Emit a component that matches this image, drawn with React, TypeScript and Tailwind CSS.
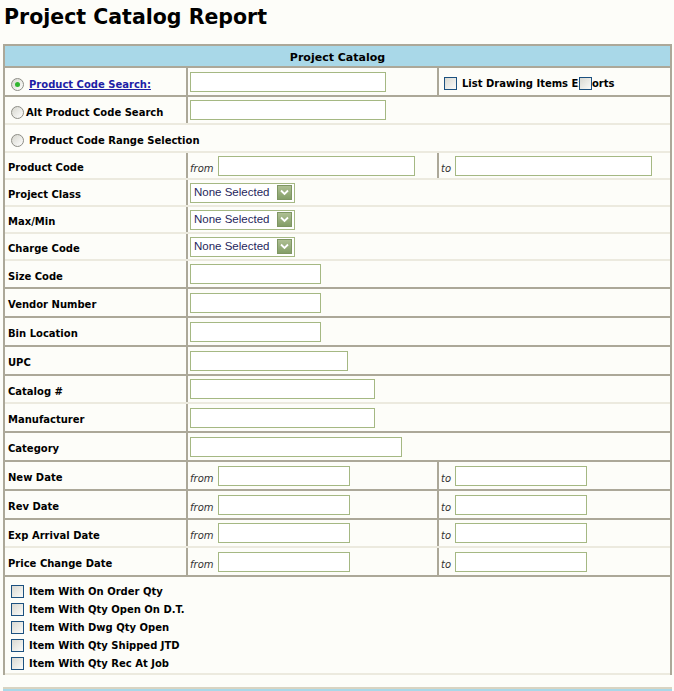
import React from 'react'

const dark = 'border-b-2 border-[#aca899]'
const light = 'border-b-2 border-[#eceadf]'
const divider = 'border-l-2 border-[#aca899]'

function Box({ className = '' }: { className?: string }) {
  return <span className={`inline-block w-[13px] h-[13px] shrink-0 border border-[#1c5180] bg-linear-to-br from-[#d9d9d2] to-[#fbfbf9] ${className}`} />
}

function Radio({ checked = false }: { checked?: boolean }) {
  return (
    <span className="w-[13px] h-[13px] shrink-0 rounded-full border border-[#8d8d86] bg-linear-to-br from-[#d6d6ce] to-white flex items-center justify-center">
      {checked && <span className="w-[5px] h-[5px] rounded-full bg-[#2fb52f]" />}
    </span>
  )
}

function Field({ w }: { w: string }) {
  return <input type="text" className={`h-[20px] ${w} border border-[#a5b883] bg-white outline-none`} />
}

function Select() {
  return (
    <div className="w-[105px] h-[20px] border border-[#a5b883] bg-white flex items-center justify-between pl-[3px] pr-[2px]">
      <span className="font-['Liberation_Sans',Arial,sans-serif] text-[11.5px] text-[#1f1f5c]">None Selected</span>
      <span className="w-[15px] h-[15px] border border-[#7f9663] bg-linear-to-b from-[#aebf93] to-[#849e68] flex items-center justify-center">
        <svg width="9" height="7" viewBox="0 0 9 7">
          <path d="M1 1.5 L4.5 5 L8 1.5" stroke="white" strokeWidth="1.8" fill="none" />
        </svg>
      </span>
    </div>
  )
}

function Row({ h, line, label, children }: { h: string; line: string; label: string; children: React.ReactNode }) {
  return (
    <div className={`flex ${h} ${line}`}>
      <div className="w-[181px] flex items-center pl-[3px] pt-[4px] font-bold">{label}</div>
      <div className={`flex-1 flex items-center pl-[2px] ${divider}`}>{children}</div>
    </div>
  )
}

function RangeRow({ h, line, label, w }: { h: string; line: string; label: string; w: string }) {
  return (
    <div className={`flex ${h} ${line}`}>
      <div className="w-[181px] flex items-center pl-[3px] pt-[4px] font-bold">{label}</div>
      <div className={`w-[251px] flex items-center pl-[2px] ${divider}`}>
        <span className="w-[28px] pt-[5px] italic text-[#333]">from</span>
        <Field w={w} />
      </div>
      <div className={`flex-1 flex items-center pl-[2px] ${divider}`}>
        <span className="w-[14px] pt-[5px] italic text-[#333]">to</span>
        <Field w={w} />
      </div>
    </div>
  )
}

export default function App() {
  const options = [
    'Item With On Order Qty',
    'Item With Qty Open On D.T.',
    'Item With Dwg Qty Open',
    'Item With Qty Shipped JTD',
    'Item With Qty Rec At Job',
  ]

  return (
    <div className="min-h-screen bg-[#fdfdf9] text-black font-['DejaVu_Sans',Verdana,sans-serif] text-[10px] overflow-hidden">
      <h1 className="pl-[4px] pt-[5px] h-[44px] text-[20.5px] leading-[24px] font-bold">Project Catalog Report</h1>

      <div className="ml-[3px] w-[669px] border-x-2 border-t-2 border-[#aca899]">
        {/* header */}
        <div className={`h-[22px] pt-[4px] bg-[#a9d8e8] flex items-center justify-center font-bold text-[11px] ${dark}`}>Project Catalog</div>

        {/* search mode */}
        <div className={`flex h-[29px] ${dark}`}>
          <div className="w-[181px] flex items-center gap-[5px] pl-[6px] pt-[5px] font-bold">
            <Radio checked />
            <span className="text-[#1e1ea6] underline">Product Code Search:</span>
          </div>
          <div className={`w-[251px] flex items-center pl-[2px] ${divider}`}>
            <Field w="w-[196px]" />
          </div>
          <div className={`relative flex-1 flex items-center gap-[5px] pl-[5px] pt-[4px] font-bold ${divider}`}>
            <Box />
            <span>List Drawing Items Exports</span>
            <Box className="absolute left-[140px] top-[9px]" />
          </div>
        </div>

        <div className={`flex h-[28px] ${light}`}>
          <div className="w-[181px] flex items-center gap-[2px] pl-[6px] pt-[5px] font-bold">
            <Radio />
            <span>Alt Product Code Search</span>
          </div>
          <div className={`flex-1 flex items-center pl-[2px] ${divider}`}>
            <Field w="w-[196px]" />
          </div>
        </div>

        <div className={`flex h-[28px] items-center gap-[5px] pl-[6px] pt-[4px] font-bold ${light}`}>
          <Radio />
          <span>Product Code Range Selection</span>
        </div>

        <RangeRow h="h-[27px]" line={light} label="Product Code" w="w-[197px]" />
        <Row h="h-[27px]" line={light} label="Project Class"><Select /></Row>
        <Row h="h-[27px]" line={light} label="Max/Min"><Select /></Row>
        <Row h="h-[27px]" line={light} label="Charge Code"><Select /></Row>
        <Row h="h-[28px]" line={dark} label="Size Code"><Field w="w-[131px]" /></Row>
        <Row h="h-[29px]" line={dark} label="Vendor Number"><Field w="w-[131px]" /></Row>
        <Row h="h-[29px]" line={dark} label="Bin Location"><Field w="w-[131px]" /></Row>
        <Row h="h-[29px]" line={dark} label="UPC"><Field w="w-[158px]" /></Row>
        <Row h="h-[28px]" line={light} label="Catalog #"><Field w="w-[185px]" /></Row>
        <Row h="h-[29px]" line={dark} label="Manufacturer"><Field w="w-[185px]" /></Row>
        <Row h="h-[29px]" line={dark} label="Category"><Field w="w-[212px]" /></Row>
        <RangeRow h="h-[29px]" line={dark} label="New Date" w="w-[132px]" />
        <RangeRow h="h-[29px]" line={dark} label="Rev Date" w="w-[132px]" />
        <RangeRow h="h-[28px]" line={light} label="Exp Arrival Date" w="w-[132px]" />
        <RangeRow h="h-[29px]" line={dark} label="Price Change Date" w="w-[132px]" />

        {/* filters */}
        <div className={`pt-[5px] pb-[1px] pl-[6px] ${light}`}>
          {options.map(o => (
            <div key={o} className="h-[18px] flex items-center gap-[5px] font-bold">
              <Box />
              <span>{o}</span>
            </div>
          ))}
        </div>
      </div>

      <div className="mt-[12px] ml-[3px] w-[669px] border-t-2 border-[#d9d4c2] h-[20px] bg-[#a9d8e8]" />
    </div>
  )
}
